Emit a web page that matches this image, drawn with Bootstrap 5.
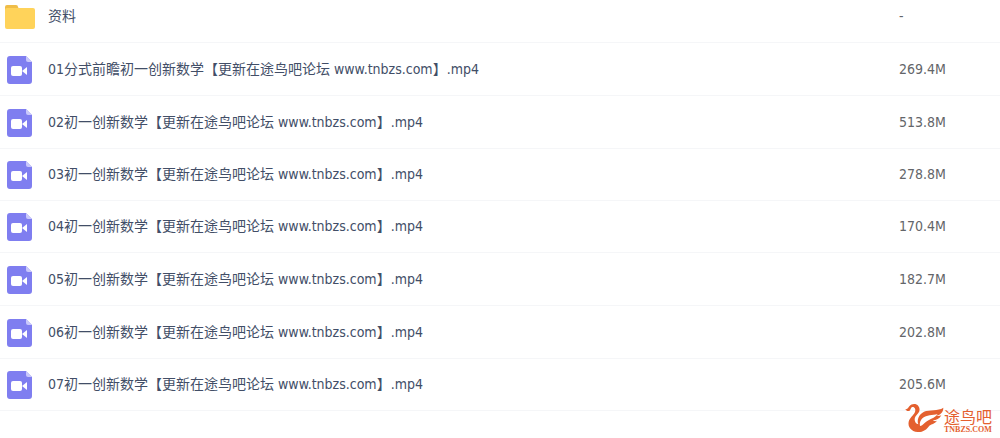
<!DOCTYPE html>
<html lang="zh-CN">
<head>
<meta charset="utf-8">
<meta name="viewport" content="width=device-width, initial-scale=1">
<title>资料</title>
<link href="https://cdn.jsdelivr.net/npm/bootstrap@5.3.0/dist/css/bootstrap.min.css" rel="stylesheet">
<style>
body{font-family:"DejaVu Sans Condensed","Noto Sans CJK SC",sans-serif;font-size:14px;line-height:20px;background:#fff}
.files{table-layout:fixed}
.files td{padding:0;height:53px;border-bottom:1px solid #f5f6f8}
.files tr:first-child td{height:42px;padding-bottom:9px}
.files tr:nth-child(4) td,.files tr:nth-child(5) td,.files tr:nth-child(8) td{height:52px}
.files .size-col{width:101px}
.files .size{color:#636569}
.files a{color:#424e67}
.file-icon{width:32px;height:32px;margin:0 13px 0 3px;flex:none}
.brand{color:#e4602f;right:8px;bottom:1px}
.brand-name{font-size:16px;line-height:16px}
.brand-url{font:bold 8px/8px "Liberation Serif",serif}
</style>
<script src="https://cdn.jsdelivr.net/npm/bootstrap@5.3.0/dist/js/bootstrap.bundle.min.js"></script>
</head>
<body>
<svg class="d-none" aria-hidden="true">
  <symbol id="video" viewBox="0 0 32 32">
    <path fill="#7f7ef0" d="M6 3h17l6 6v19q0 3-3 3H7q-3 0-3-3V6q0-3 3-3z"/>
    <path fill="#c9c8fb" d="M23 3l6 6h-4q-2 0-2-2z"/>
    <rect x="8" y="13" width="11" height="10" rx="2" fill="#fff"/>
    <path fill="#fff" d="M19 18l5-4v8l-5-4z"/>
  </symbol>
</svg>
<main class="position-relative pb-4">
<table class="files w-100 align-middle">
<colgroup><col><col class="size-col"></colgroup>
<tbody>
<tr><td><div class="d-flex align-items-center"><svg class="file-icon" viewBox="0 0 32 32" aria-hidden="true"><path fill="#efbd48" d="M2 8V7q0-2 2-2h9q2 0 2 2l1 2h14v4H2z"/><rect x="2" y="8" width="30" height="21" rx="2" fill="#ffd35a"/></svg><a href="#" class="text-decoration-none">资料</a></div></td><td class="size">-</td></tr>
<tr><td><div class="d-flex align-items-center"><svg class="file-icon" aria-hidden="true"><use href="#video"/></svg><a href="#" class="text-decoration-none">01分式前瞻初一创新数学【更新在途鸟吧论坛 www.tnbzs.com】.mp4</a></div></td><td class="size">269.4M</td></tr>
<tr><td><div class="d-flex align-items-center"><svg class="file-icon" aria-hidden="true"><use href="#video"/></svg><a href="#" class="text-decoration-none">02初一创新数学【更新在途鸟吧论坛 www.tnbzs.com】.mp4</a></div></td><td class="size">513.8M</td></tr>
<tr><td><div class="d-flex align-items-center"><svg class="file-icon" aria-hidden="true"><use href="#video"/></svg><a href="#" class="text-decoration-none">03初一创新数学【更新在途鸟吧论坛 www.tnbzs.com】.mp4</a></div></td><td class="size">278.8M</td></tr>
<tr><td><div class="d-flex align-items-center"><svg class="file-icon" aria-hidden="true"><use href="#video"/></svg><a href="#" class="text-decoration-none">04初一创新数学【更新在途鸟吧论坛 www.tnbzs.com】.mp4</a></div></td><td class="size">170.4M</td></tr>
<tr><td><div class="d-flex align-items-center"><svg class="file-icon" aria-hidden="true"><use href="#video"/></svg><a href="#" class="text-decoration-none">05初一创新数学【更新在途鸟吧论坛 www.tnbzs.com】.mp4</a></div></td><td class="size">182.7M</td></tr>
<tr><td><div class="d-flex align-items-center"><svg class="file-icon" aria-hidden="true"><use href="#video"/></svg><a href="#" class="text-decoration-none">06初一创新数学【更新在途鸟吧论坛 www.tnbzs.com】.mp4</a></div></td><td class="size">202.8M</td></tr>
<tr><td><div class="d-flex align-items-center"><svg class="file-icon" aria-hidden="true"><use href="#video"/></svg><a href="#" class="text-decoration-none">07初一创新数学【更新在途鸟吧论坛 www.tnbzs.com】.mp4</a></div></td><td class="size">205.6M</td></tr>
</tbody>
</table>
<div class="brand position-absolute d-flex align-items-end">
  <svg width="39" height="31" viewBox="46 24 117 93" aria-hidden="true"><path fill="currentColor" d="M47 42C53 44 55 39 59 34C66 25 80 25 86 33C91 40 91 48 86 54C80 61 74 66 75 75C76 82 80 87 86 88C81 75 87 58 103 50C119 43 145 49 161 38C161 52 151 60 140 62C145 64 150 63 155 61C150 71 140 76 129 76C133 79 138 79 142 77C135 87 125 87 119 92C111 104 99 112 84 111C64 109 54 95 57 80C60 68 72 61 76 51C79 43 75 35 68 36C63 37 64 43 60 47C55 50 49 47 47 42ZM91 93C101 91 104 82 114 77C127 70 138 67 144 57C128 62 111 59 99 69C92 75 89 84 91 93Z"/></svg>
  <div><div class="brand-name">途鸟吧</div><div class="brand-url">TNBZS.COM</div></div>
</div>
</main>
</body>
</html>
